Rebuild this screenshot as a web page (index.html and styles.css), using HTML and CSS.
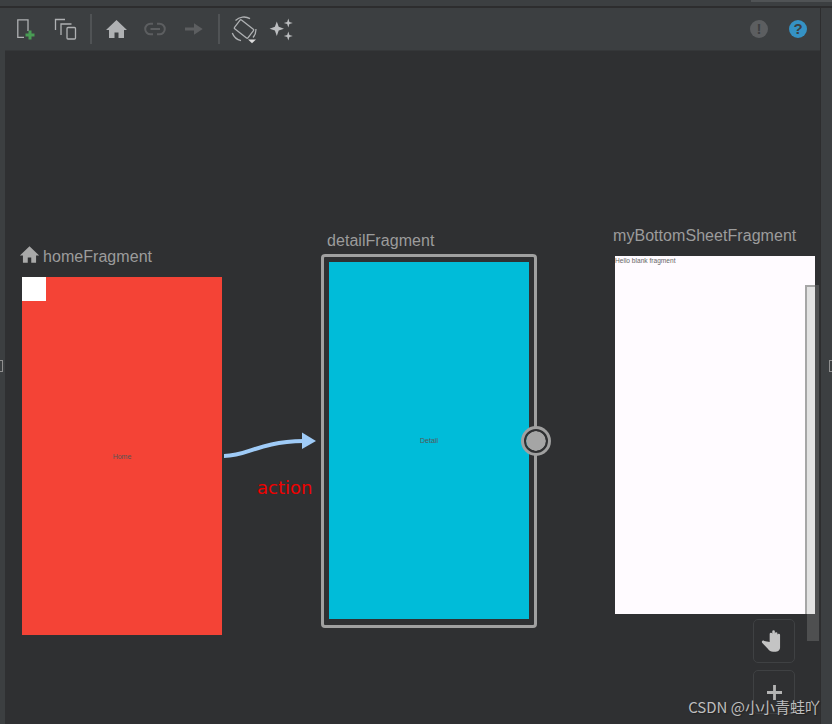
FILE: index.html
```html
<!DOCTYPE html>
<html>
<head>
    <title>Navigation Editor</title>
    <meta charset="utf-8">
    <link rel="stylesheet" href="styles.css">
</head>
<body>
    <div class="top-strip"></div>
    <div class="top-tab"></div>

    <div class="toolbar">
        <div class="tool-group group-files">
            <!-- new destination -->
            <svg class="icon" viewBox="0 0 24 24" fill="none">
                <path d="M11 20.300H4.800V2.800H15V14" stroke="#afb1b3" stroke-width="1.300"/>
                <path d="M15.500 13.500h3v3h3v3h-3v3h-3v-3h-3v-3h3z" fill="#499c54"/>
            </svg>
            <!-- group -->
            <svg class="icon" viewBox="0 0 24 24" fill="none" stroke="#afb1b3" stroke-width="1.300">
                <path d="M2.500 13V2.500H12"/>
                <path d="M8 18V7H18.500"/>
                <rect x="14" y="10.500" width="8.500" height="11.500" rx="1"/>
            </svg>
        </div>
        <div class="sep first-sep"></div>
        <div class="tool-group group-nav">
            <svg class="icon" viewBox="0 0 24 24">
                <path d="M12.500 3L2 13h3v8h5.500v-5.500h4V21H20v-8h3z" fill="#afb1b3"/>
            </svg>
            <svg class="icon" viewBox="0 0 24 24" fill="none" stroke="#5c5e60" stroke-width="2">
                <path d="M10 6.700H7.500a5.300 5.300 0 0 0 0 10.600H10M14 6.700h2.500a5.300 5.300 0 0 1 0 10.600H14M7.500 12h9.500"/>
            </svg>
            <svg class="icon" viewBox="0 0 24 24">
                <path d="M3 10.500h9V6.300l8.700 5.700-8.700 5.700v-4.200H3z" fill="#5c5e60"/>
            </svg>
        </div>
        <div class="sep last-sep"></div>
        <div class="tool-group group-view">
            <svg class="icon rotate-icon" viewBox="0 0 28 28" fill="none" stroke="#afb1b3" stroke-width="1.300">
                <rect x="8.500" y="5.500" width="11" height="17" rx="1" transform="rotate(-52 14 14)"/>
                <path d="M5.500 5.500A12 12 0 0 1 20 3.600"/>
                <path d="M2.300 18A12 12 0 0 0 11 25.600"/>
                <path d="M25.900 14A12 12 0 0 1 23 22.500"/>
                <path d="M18 24.500h8l-4 3.700z" fill="#dcdcdc" stroke="none"/>
            </svg>
            <svg class="icon" viewBox="0 0 24 24">
                <path d="M6.800 4.500l1.900 5.300 5.300 1.900-5.300 1.900-1.900 5.300-1.900-5.300-5.300-1.900 5.300-1.900zM18.300 1.500l1.100 3.400 3.400 1.100-3.400 1.100-1.100 3.400-1.100-3.400-3.400-1.100 3.400-1.100zM18.300 14.500l1.100 3.400 3.400 1.100-3.400 1.100-1.100 3.400-1.100-3.400-3.400-1.100 3.400-1.100z" fill="#bcbec0"/>
            </svg>
        </div>
        <div class="tool-spacer"></div>
        <div class="status-group">
            <div class="round-badge warn">!</div>
            <div class="round-badge help">?</div>
        </div>
    </div>

    <div class="canvas">
        <!-- home -->
        <div class="node-label home-label">
            <svg class="home-icon" viewBox="0 0 24 24">
                <path d="M12 2.500L1 13h3.500v8.500h5.500v-6h4v6h5.500V13H23z" fill="#a9a9a9"/>
            </svg>
            homeFragment
        </div>
        <div class="fragment home-fragment">
            <div class="corner-box"></div>
            <span class="tiny-text">Home</span>
        </div>

        <!-- action -->
        <svg class="action-arrow" viewBox="0 0 96 30" fill="none">
            <path d="M0 25C25 25 32 11 80 10" stroke="#9fcbf7" stroke-width="4"/>
            <path d="M78 1.500L92 10 78 18z" fill="#9fcbf7"/>
        </svg>
        <div class="action-label">action</div>

        <!-- detail -->
        <div class="node-label detail-label">detailFragment</div>
        <div class="selected-frame">
            <div class="fragment detail-fragment">
                <span class="tiny-text">Detail</span>
            </div>
        </div>
        <div class="handle"></div>

        <!-- bottom sheet -->
        <div class="node-label sheet-label">myBottomSheetFragment</div>
        <div class="fragment sheet-fragment">
            <span class="hello-text">Hello blank fragment</span>
        </div>

        <div class="scroll-thumb"></div>
        <div class="scroll-light"></div>

        <!-- zoom buttons -->
        <div class="canvas-btn hand-btn">
            <svg class="hand-icon" viewBox="0 0 24 24">
                <path d="M8 13V5.500a1.200 1.200 0 0 1 2.400 0V3.200a1.200 1.200 0 0 1 2.400 0v2a1.200 1.200 0 0 1 2.400 0v1.300a1.200 1.200 0 0 1 2.400 0V18c0 2.500-2 4-5 4h-1.500c-2 0-3.500-1-5-3L1 13.500c-.8-1.200.8-2.500 2-1.600z" fill="#c4c4c4"/>
            </svg>
        </div>
        <div class="canvas-btn plus-btn">
            <svg class="plus-icon" viewBox="0 0 16 16">
                <path d="M6.500 0h3v6.500H16v3H9.500V16h-3V9.500H0v-3h6.500z" fill="#b4b4b4"/>
            </svg>
        </div>
    </div>

    <div class="right-strip"></div>
    <div class="edge-mark left-mark"></div>
    <div class="edge-mark right-mark"></div>
    <div class="watermark">CSDN @小小青蛙吖</div>
</body>
</html>
```

FILE: styles.css
```css
html, body {
    margin: 0;
    padding: 0;
}

body {
    width: 832px;
    height: 724px;
    overflow: hidden;
    position: relative;
    background-color: #3c3f41;
    font-family: "Liberation Sans", Arial, sans-serif;
}

.top-strip {
    height: 6px;
    background-color: #3c3f41;
    border-bottom: 2px solid #2d2d2e;
}

.top-tab {
    position: absolute;
    left: 751px;
    top: 0;
    width: 81px;
    height: 2px;
    background-color: #505355;
}

.toolbar {
    height: 42px;
    display: flex;
    align-items: center;
    margin-left: 5px;
    margin-right: 12px;
    padding-left: 8px;
    background-color: #3c3f41;
}

.tool-group {
    display: flex;
    align-items: center;
}

.group-files {
    gap: 16px;
}

.group-nav {
    gap: 15px;
}

.group-view {
    gap: 12px;
}

.icon {
    width: 24px;
    height: 24px;
    flex: none;
    overflow: visible;
}

.rotate-icon {
    width: 28px;
    height: 28px;
}

.sep {
    width: 2px;
    height: 30px;
    margin: 0 12px;
    background-color: #505355;
}

.first-sep {
    margin-left: 13px;
}

.last-sep {
    margin-right: 10px;
}

.tool-spacer {
    flex: 1;
}

.status-group {
    display: flex;
    gap: 21px;
    padding-right: 13px;
}

.round-badge {
    width: 18px;
    height: 18px;
    border-radius: 50%;
    font-size: 15px;
    font-weight: bold;
    line-height: 18px;
    text-align: center;
    color: #3c3f41;
}

.warn {
    background-color: #5c5e60;
}

.help {
    background-color: #3592c4;
}

.canvas {
    position: absolute;
    left: 5px;
    top: 50px;
    width: 815px;
    height: 674px;
    overflow: hidden;
    background-color: #2f3032;
    border-top: 1px solid #353739;
    box-sizing: border-box;
}

.right-strip {
    position: absolute;
    left: 820px;
    top: 8px;
    width: 12px;
    height: 716px;
    background-color: #3c3f41;
    border-left: 1px solid #2d2d2e;
    box-sizing: border-box;
}

.edge-mark {
    position: absolute;
    top: 360px;
    width: 3px;
    height: 12px;
    box-sizing: border-box;
    border: 1px solid #8f8f8f;
}

.left-mark {
    left: 0;
    border-left: 0;
}

.right-mark {
    right: 0;
    border-right: 0;
}

.node-label {
    position: absolute;
    font-size: 16px;
    letter-spacing: 0.05px;
    line-height: 20px;
    color: #9c9c9c;
    white-space: nowrap;
}

.home-label {
    left: 14px;
    top: 196px;
    display: flex;
    align-items: center;
    gap: 3px;
}

.home-icon {
    width: 21px;
    height: 21px;
    margin-top: -5px;
}

.detail-label {
    left: 322px;
    top: 180px;
}

.sheet-label {
    left: 608px;
    top: 175px;
}

.fragment {
    display: flex;
    align-items: center;
    justify-content: center;
    width: 200px;
    height: 358px;
    position: absolute;
}

.home-fragment {
    left: 17px;
    top: 226px;
    background-color: #f44336;
}

.corner-box {
    position: absolute;
    left: 0;
    top: 0;
    width: 24px;
    height: 24px;
    background-color: #ffffff;
}

.tiny-text {
    font-size: 7px;
    color: #555555;
}

.selected-frame {
    position: absolute;
    left: 316px;
    top: 203px;
    width: 216px;
    height: 374px;
    box-sizing: border-box;
    border: 3px solid #a0a0a0;
    border-radius: 4px;
}

.detail-fragment {
    left: 5px;
    top: 5px;
    height: 357px;
    background-color: #00bcd9;
}

.sheet-fragment {
    left: 610px;
    top: 205px;
    align-items: flex-start;
    justify-content: flex-start;
    background-color: #fffbff;
}

.hello-text {
    font-size: 6.6px;
    line-height: 9px;
    color: #666666;
}

.handle {
    position: absolute;
    left: 519px;
    top: 378px;
    width: 20px;
    height: 20px;
    border-radius: 50%;
    background-color: #a5a5a5;
    background-clip: padding-box;
    border: 2px solid #2f3032;
    box-shadow: 0 0 0 3px #a0a0a0;
}

.action-arrow {
    position: absolute;
    left: 219px;
    top: 380px;
    width: 96px;
    height: 30px;
}

.action-label {
    position: absolute;
    left: 252px;
    top: 426px;
    font-family: "DejaVu Sans", sans-serif;
    font-size: 18px;
    line-height: 22px;
    color: #f00000;
}

.scroll-thumb {
    position: absolute;
    left: 802px;
    top: 234px;
    width: 12px;
    height: 356px;
    background-color: #4e4f50;
}

.scroll-light {
    position: absolute;
    left: 800px;
    top: 234px;
    width: 10px;
    height: 329px;
    box-sizing: border-box;
    background-color: #e2e2e2;
    border-left: 2px solid #a6a6a6;
    border-top: 2px solid #a6a6a6;
}

.canvas-btn {
    position: absolute;
    left: 748px;
    width: 42px;
    height: 44px;
    box-sizing: border-box;
    display: flex;
    align-items: center;
    justify-content: center;
    border: 1px solid #3f4143;
    border-radius: 5px;
}

.hand-btn {
    top: 568px;
}

.plus-btn {
    top: 619px;
}

.hand-icon {
    width: 26px;
    height: 26px;
}

.plus-icon {
    width: 15px;
    height: 15px;
}

.watermark {
    position: absolute;
    right: 12px;
    top: 697px;
    font-family: "Noto Sans CJK SC", "DejaVu Sans", sans-serif;
    font-size: 15px;
    line-height: 20px;
    color: #bdbdbd;
    text-shadow: 1px 1px 1px #222222;
}
```
